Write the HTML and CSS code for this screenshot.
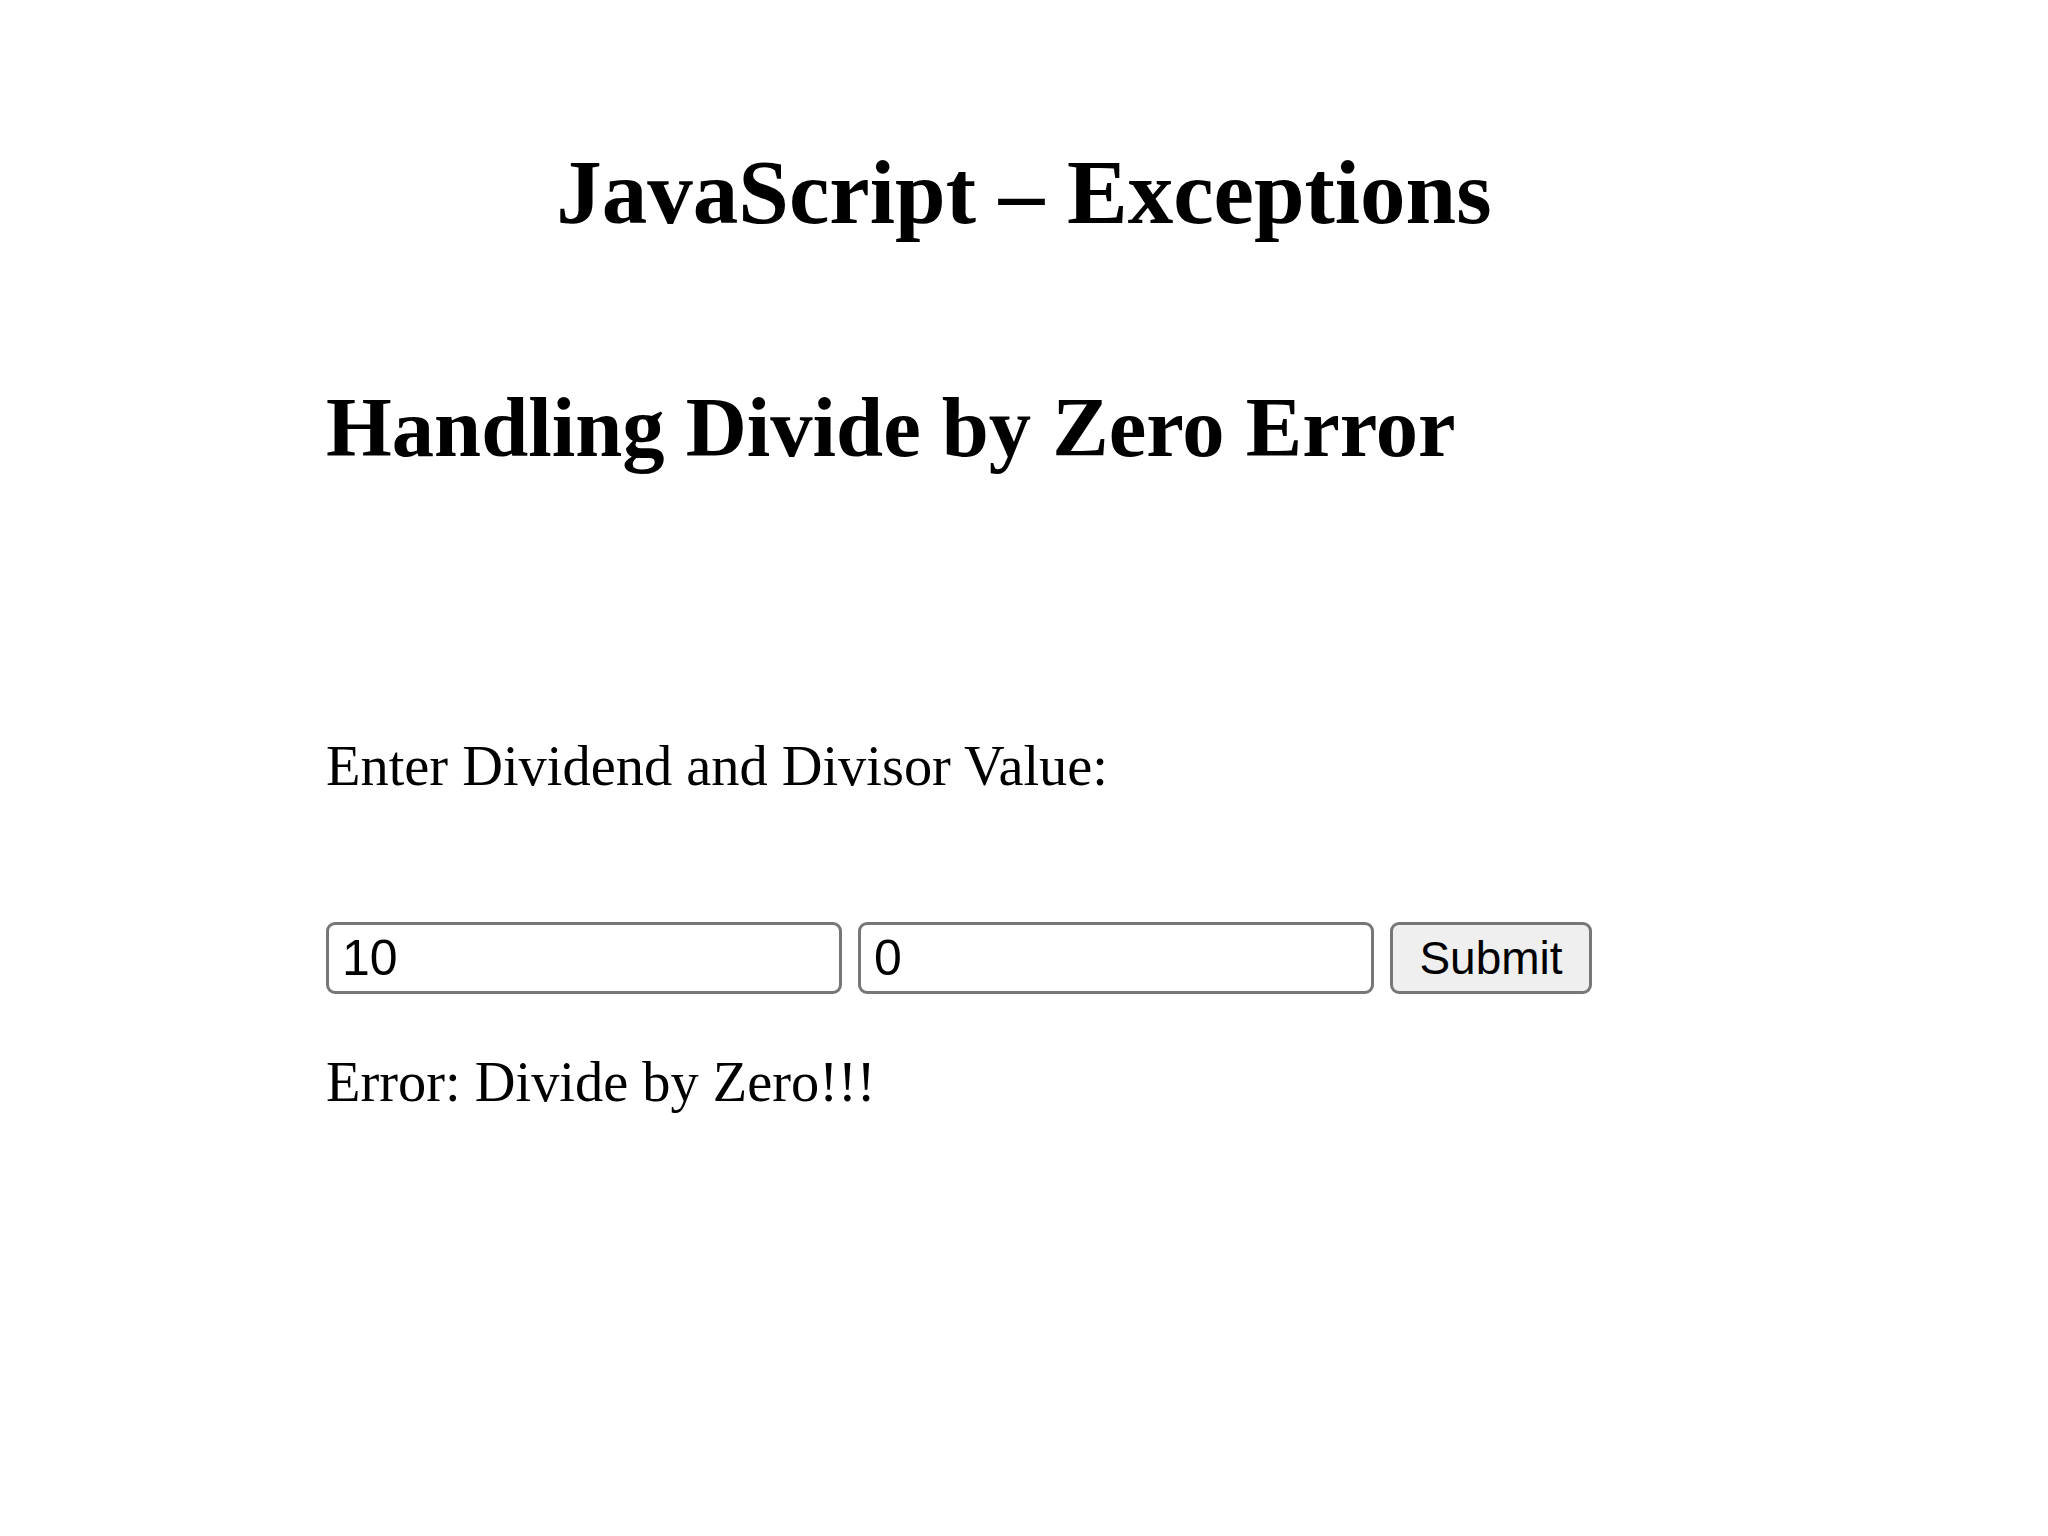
FILE: index.html
```html
<!DOCTYPE html>
<html lang="en">
<head>
<meta charset="UTF-8">
<meta name="viewport" content="width=device-width, initial-scale=1.0">
<title>JavaScript - Exceptions</title>
<link rel="stylesheet" href="styles.css">
</head>

<body>
<h1 class="title">JavaScript – Exceptions</h1>

<div class="demo">
    <h2>Handling Divide by Zero Error</h2>
    <p class="prompt">Enter Dividend and Divisor Value:</p>
    <div class="row">
        <input type="text" id="dividend" value="10">
        <input type="text" id="divisor" value="0">
        <button onclick="divide()">Submit</button>
    </div>
    <p id="result" class="result">Error: Divide by Zero!!!</p>
</div>

<script>
function divide() {
    const a = Number(document.getElementById("dividend").value);
    const b = Number(document.getElementById("divisor").value);
    const result = document.getElementById("result");
    try {
        if (b === 0) {
            throw "Divide by Zero!!!";
        }
        result.innerText = "Result: " + (a / b);
    } catch (err) {
        result.innerText = "Error: " + err;
    }
}
</script>
</body>
</html>
```

FILE: styles.css
```css
body {
    margin: 0;
    font-family: "Liberation Serif", "Times New Roman", serif;
    color: #000;
    background: #fff;
}
.title {
    margin: 0;
    padding-top: 138px;
    font-size: 91px;
    line-height: 1.2;
    text-align: center;
}
.demo {
    padding-left: 326px;
}
h2 {
    margin: 130px 0 0;
    font-size: 84.6px;
    line-height: 1.2;
}
.prompt {
    margin: 254px 0 0;
    font-size: 56.4px;
    line-height: 1.2;
}
.row {
    display: flex;
    gap: 16px;
    margin-top: 122px;
}
input, button {
    box-sizing: border-box;
    height: 72px;
    border: 3px solid #777;
    border-radius: 9px;
    font-family: "Liberation Sans", Arial, sans-serif;
    color: #000;
}
input {
    width: 516px;
    padding: 0 13px;
    font-size: 50px;
    background: #fff;
}
button {
    width: 202px;
    padding: 0;
    font-size: 46px;
    background-color: #efefef;
}
.result {
    margin: 55px 0 0;
    font-size: 56.4px;
    line-height: 1.2;
}
```
